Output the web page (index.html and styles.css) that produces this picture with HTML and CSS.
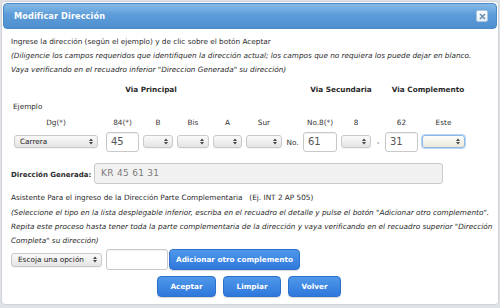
FILE: index.html
```html
<!DOCTYPE html>
<html lang="es">
<head>
<meta charset="utf-8">
<title>Modificar Dirección</title>
<link rel="stylesheet" href="styles.css">
</head>
<body>
<div class="dialog">
  <div class="titlebar">
    <span class="title">Modificar Dirección</span>
    <span class="close"><svg width="7" height="7" viewBox="0 0 7 7"><path d="M1 1L6 6M6 1L1 6" stroke="#6d8fb0" stroke-width="1.6"/></svg></span>
  </div>
  <div class="content">
    <p class="intro">Ingrese la dirección (según el ejemplo) y de clic sobre el botón Aceptar</p>
    <p class="note">(Diligencie los campos requeridos que identifiquen la dirección actual; los campos que no requiera los puede dejar en blanco.<br>Vaya verificando en el recuadro inferior "Direccion Generada" su dirección)</p>

    <div class="vias">
      <span class="via via-p">Via Principal</span>
      <span class="via via-s">Via Secundaria</span>
      <span class="via via-c">Via Complemento</span>
    </div>
    <div class="ejemplo">Ejemplo</div>

    <div class="fields">
      <div class="field f-carrera"><span class="lbl">Dg(*)</span><div class="sel w84"><span class="opt">Carrera</span><svg class="arr" width="4" height="7" viewBox="0 0 4 7"><path d="M0 3L2 0.5L4 3ZM0 4L2 6.5L4 4Z" fill="#444"/></svg></div></div>
      <div class="field"><span class="lbl">84(*)</span><div class="inp w33">45</div></div>
      <div class="field"><span class="lbl">B</span><div class="sel w30"><svg class="arr" width="4" height="7" viewBox="0 0 4 7"><path d="M0 3L2 0.5L4 3ZM0 4L2 6.5L4 4Z" fill="#444"/></svg></div></div>
      <div class="field"><span class="lbl">Bis</span><div class="sel w32"><svg class="arr" width="4" height="7" viewBox="0 0 4 7"><path d="M0 3L2 0.5L4 3ZM0 4L2 6.5L4 4Z" fill="#444"/></svg></div></div>
      <div class="field"><span class="lbl">A</span><div class="sel w29"><svg class="arr" width="4" height="7" viewBox="0 0 4 7"><path d="M0 3L2 0.5L4 3ZM0 4L2 6.5L4 4Z" fill="#444"/></svg></div></div>
      <div class="field"><span class="lbl">Sur</span><div class="sel w36"><svg class="arr" width="4" height="7" viewBox="0 0 4 7"><path d="M0 3L2 0.5L4 3ZM0 4L2 6.5L4 4Z" fill="#444"/></svg></div></div>
      <div class="field sep"><span class="lbl">&nbsp;</span><span class="septxt">No.</span></div>
      <div class="field"><span class="lbl">No.8(*)</span><div class="inp w34">61</div></div>
      <div class="field"><span class="lbl">8</span><div class="sel w30"><svg class="arr" width="4" height="7" viewBox="0 0 4 7"><path d="M0 3L2 0.5L4 3ZM0 4L2 6.5L4 4Z" fill="#444"/></svg></div></div>
      <div class="field sep dash"><span class="lbl">&nbsp;</span><span class="septxt">-</span></div>
      <div class="field"><span class="lbl">62</span><div class="inp w33">31</div></div>
      <div class="field"><span class="lbl">Este</span><div class="sel w43 focus"><svg class="arr" width="4" height="7" viewBox="0 0 4 7"><path d="M0 3L2 0.5L4 3ZM0 4L2 6.5L4 4Z" fill="#444"/></svg></div></div>
    </div>

    <div class="generada">
      <span class="gen-lbl">Dirección Generada:</span>
      <div class="gen-box">KR 45 61 31</div>
    </div>

    <p class="asist">Asistente Para el ingreso de la Dirección Parte Complementaria &nbsp; (Ej. INT 2 AP 505)</p>
    <p class="note note2">(Seleccione el tipo en la lista desplegable inferior, escriba en el recuadro el detalle y pulse el botón "Adicionar otro complemento".<br>Repita este proceso hasta tener toda la parte complementaria de la dirección y vaya verificando en el recuadro superior "Dirección<br>Completa" su dirección)</p>

    <div class="comp-row">
      <div class="sel w91 tall"><span class="opt">Escoja una opción</span><svg class="arr" width="4" height="7" viewBox="0 0 4 7"><path d="M0 3L2 0.5L4 3ZM0 4L2 6.5L4 4Z" fill="#444"/></svg></div>
      <div class="inp w62 comp-inp"></div>
      <button class="btn btn-add">Adicionar otro complemento</button>
    </div>

    <div class="actions">
      <button class="btn btn-a">Aceptar</button>
      <button class="btn btn-l">Limpiar</button>
      <button class="btn btn-v">Volver</button>
    </div>
  </div>
</div>
</body>
</html>
```

FILE: styles.css
```css
html, body {
  margin: 0;
  padding: 0;
}
body {
  width: 500px;
  height: 308px;
  background: #dfe3e7;
  font-family: "DejaVu Sans", Verdana, sans-serif;
  font-size: 7.3px;
  color: #2b2b2b;
  overflow: hidden;
}
.dialog {
  box-sizing: border-box;
  margin: 1px 1px 0 1px;
  width: 498px;
  height: 304px;
  background: #fff;
  border: 1px solid #cfd3d7;
  border-radius: 4px;
  padding: 1px;
}
.titlebar {
  box-sizing: border-box;
  height: 26px;
  display: flex;
  align-items: center;
  justify-content: space-between;
  padding: 0 8px 0 10px;
  background: linear-gradient(#86bbe8, #5d9cd8 45%, #4e8fd1);
  border: 1px solid #4b88c6;
  border-radius: 4px;
}
.title {
  color: #fff;
  font-weight: bold;
  font-size: 8.2px;
  letter-spacing: 0.1px;
}
.close {
  display: flex;
  align-items: center;
  justify-content: center;
  width: 10px;
  height: 10px;
  background: linear-gradient(#ffffff, #e6eef6);
  border: 1px solid #a9c6e2;
  border-radius: 2px;
}
.content {
  padding: 0 0 0 8px;
}
p {
  margin: 0;
}
.intro {
  margin-top: 6px;
  line-height: 14px;
}
.note {
  font-style: italic;
  line-height: 14px;
}
.vias {
  display: flex;
  margin-top: 7px;
  margin-left: -10px;
  font-weight: bold;
  line-height: 12px;
}
.via { text-align: center; }
.via-p { width: 300px; }
.via-s { width: 80px; }
.via-c { width: 94px; }
.ejemplo {
  margin-top: 5px;
  margin-left: 2px;
  line-height: 12px;
}
.fields {
  display: flex;
  align-items: flex-end;
  gap: 4px;
  margin-top: 5px;
  margin-left: 3px;
}
.field {
  display: flex;
  flex-direction: column;
  align-items: center;
  gap: 4px;
}
.f-carrera { margin-right: 4px; }
.lbl {
  line-height: 10px;
  white-space: nowrap;
  color: #333;
}
.sep { width: 13px; }
.dash { width: 6px; }
.septxt {
  height: 20px;
  line-height: 22px;
  color: #333;
}
.sel {
  box-sizing: border-box;
  height: 13px;
  margin: 3px 0 4px;
  display: flex;
  align-items: center;
  justify-content: space-between;
  padding: 0 4px 0 5px;
  background: linear-gradient(#fafafa, #e4e4e4);
  border: 1px solid #c9c9c9;
  border-radius: 3px;
  box-shadow: 0 1px 0 rgba(0,0,0,0.04);
}
.sel .arr { margin-left: auto; }
.sel.focus {
  border-color: #8db7e6;
  box-shadow: 0 0 0 1px #b9d4f2;
  background: linear-gradient(#fdfdf9, #ece9da);
}
.opt { font-size: 7.3px; color: #222; white-space: nowrap; }
.inp {
  box-sizing: border-box;
  height: 20px;
  padding: 0 4px;
  border: 1px solid #c8c8c8;
  border-radius: 3px;
  background: #fff;
  font-size: 10px;
  line-height: 18px;
  color: #555;
  box-shadow: inset 0 1px 1px rgba(0,0,0,0.06);
}
.w84 { width: 84px; }
.w33 { width: 33px; }
.w34 { width: 34px; }
.w30 { width: 30px; }
.w32 { width: 32px; }
.w29 { width: 29px; }
.w36 { width: 36px; }
.w43 { width: 43px; }
.w91 { width: 91px; }
.w62 { width: 62px; }
.generada {
  display: flex;
  align-items: center;
  margin-top: 11px;
}
.gen-lbl {
  font-weight: bold;
  flex: 0 0 83px;
  white-space: nowrap;
  margin-top: 3px;
  font-size: 7px;
}
.gen-box {
  box-sizing: border-box;
  flex: 0 0 349px;
  height: 21px;
  padding: 0 6px;
  background: #f1f1f1;
  border: 1px solid #cacaca;
  border-radius: 3px;
  font-size: 9px;
  line-height: 18px;
  color: #7a7a7a;
  letter-spacing: 0.3px;
}
.asist {
  margin-top: 8px;
  line-height: 12px;
}
.note2 {
  margin-top: 2px;
}
.comp-row {
  display: flex;
  align-items: center;
  margin-top: 1px;
}
.sel.tall { height: 14px; margin: 0; padding-left: 6px; }
.comp-inp { height: 21px; margin-left: 4px; }
.btn {
  box-sizing: border-box;
  height: 21px;
  border: 1px solid #2d6fca;
  border-radius: 4px;
  background: linear-gradient(#4f98ea, #2f78dc);
  color: #fff;
  font-family: "DejaVu Sans", Verdana, sans-serif;
  font-weight: bold;
  font-size: 7.3px;
  padding: 0;
  box-shadow: 0 1px 1px rgba(0,0,0,0.15);
}
.btn-add { width: 131px; margin-left: 1px; }
.actions {
  display: flex;
  gap: 7px;
  margin-top: 6px;
  margin-left: 146px;
}
.btn-a { width: 59px; }
.btn-l { width: 58px; }
.btn-v { width: 53px; }
```
